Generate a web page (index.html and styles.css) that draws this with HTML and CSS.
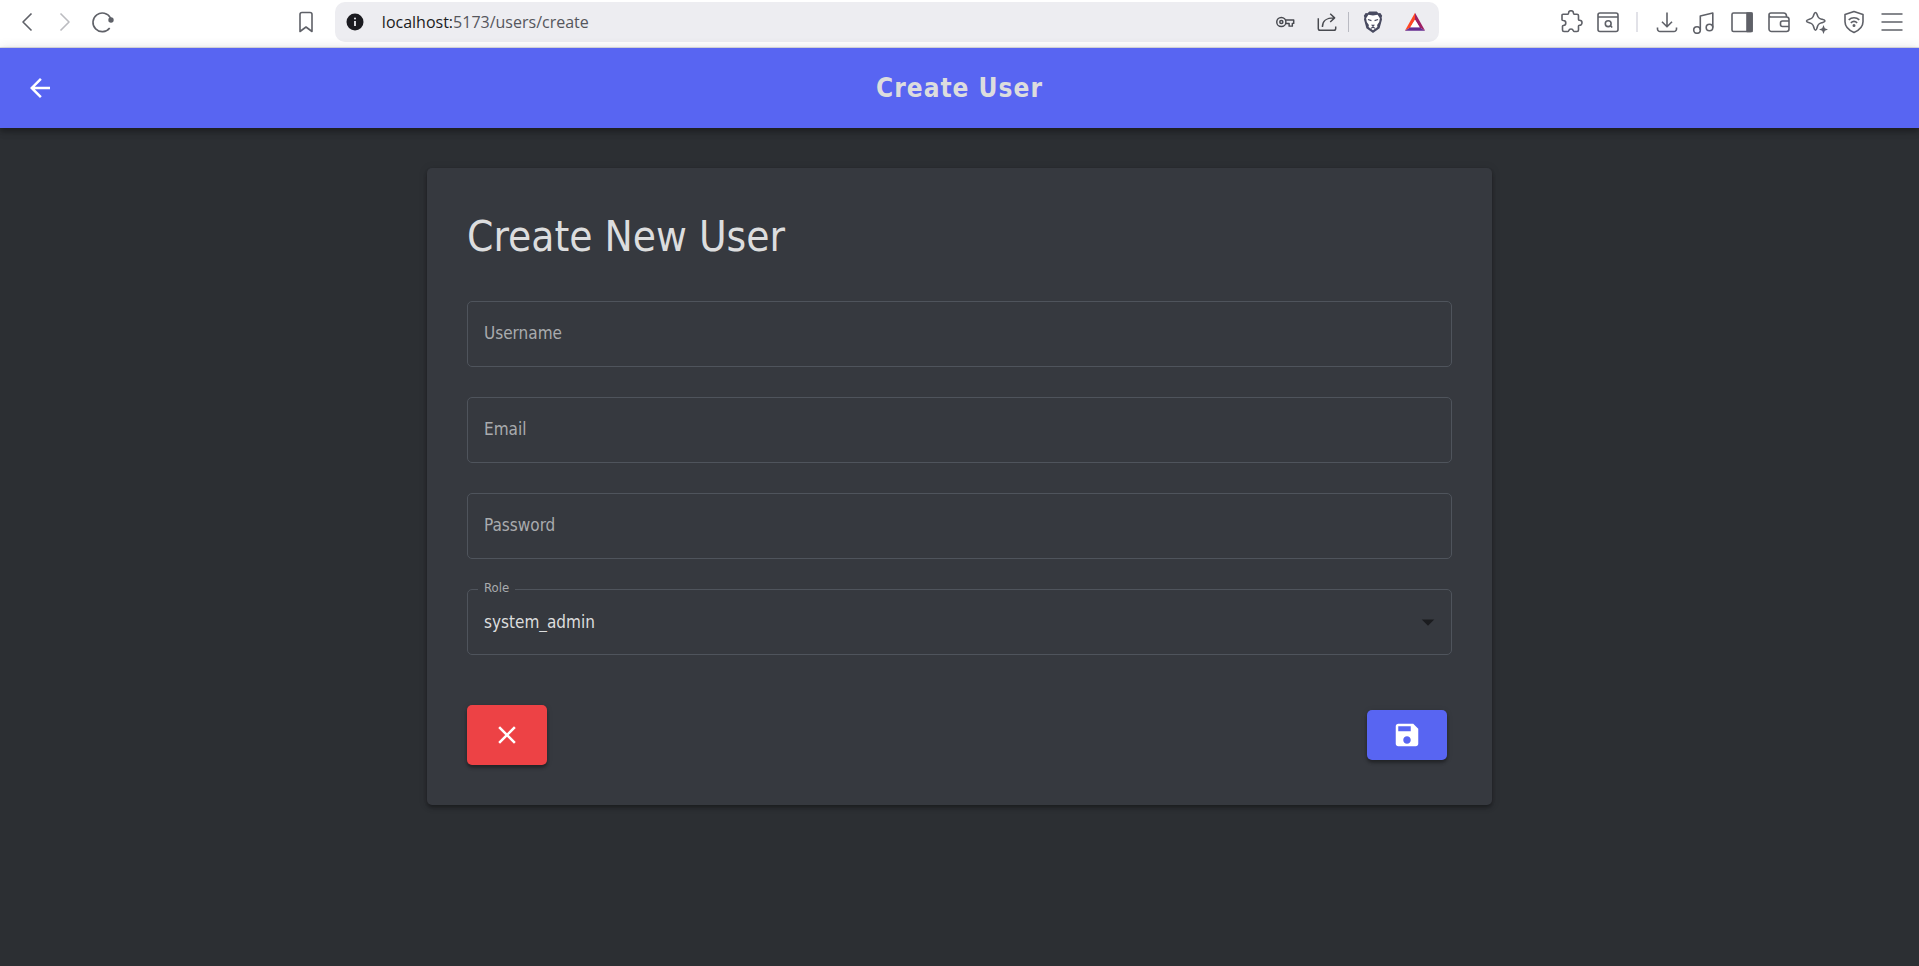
FILE: index.html
```html
<!DOCTYPE html>
<html lang="en">
<head>
<meta charset="utf-8">
<title>Create User</title>
<link rel="stylesheet" href="styles.css">
</head>
<body>
<div class="toolbar">
  <nav class="toolbar-nav" aria-label="Browser navigation">
    <button class="tool" type="button" aria-label="Back"><svg class="icon" viewBox="0 0 24 24"><path d="M16.500 3.500 8 12l8.500 8.500"/></svg></button>
    <button class="tool tool-off" type="button" aria-label="Forward"><svg class="icon" viewBox="0 0 24 24"><path d="M7.500 3.500 16 12l-8.500 8.500"/></svg></button>
    <button class="tool" type="button" aria-label="Reload"><svg class="icon" viewBox="0 0 24 24"><path d="M18.700 17.900A9.300 9.300 0 1 1 19.500 8"/><circle cx="20" cy="10" r="2.700" fill="currentColor" stroke="none"/></svg></button>
  </nav>
  <div class="toolbar-location">
    <button class="tool" type="button" aria-label="Bookmark"><svg class="icon" viewBox="0 0 24 24"><path d="M8 2.500h8a2 2 0 0 1 2 2v17l-6-4.500-6 4.500v-17a2 2 0 0 1 2-2z"/></svg></button>
    <div class="address">
      <svg class="icon icon-info" viewBox="0 0 24 24"><circle cx="12" cy="12" r="8.500" fill="#1b1b20"/><path d="M12 11v5" stroke="#ededf1" stroke-width="1.800"/><circle cx="12" cy="8.400" r="1" fill="#ededf1"/></svg>
      <a class="url" href="#"><span class="url-host">localhost:</span>5173/users/create</a>
      <div class="address-tools">
        <button class="tool" type="button" aria-label="Passwords"><svg class="icon" viewBox="0 0 24 24"><circle cx="8" cy="12" r="5"/><circle cx="8" cy="12" r="1.700"/><path d="M12.500 9.800H21.500v3.700H20v3h-3.500v-2.800h-3.800"/></svg></button>
        <button class="tool tool-share" type="button" aria-label="Share"><svg class="icon" viewBox="0 0 24 24"><path d="M2.500 8v11a2 2 0 0 0 2 2h15a2 2 0 0 0 2-2v-2M7 17.500C7 11 10 7.500 20 7.500M15.500 3l4.800 4.500-4.800 4.500"/></svg></button>
        <span class="separator"></span>
        <button class="tool" type="button" aria-label="Shields"><svg class="icon" viewBox="0 0 24 24"><path d="M8 .5h8l2 2 2-.3 2 3-.6 2 .4 2-2.600 9.500L12 24l-7.200-5.300L2.200 9.200l.4-2-.6-2 2-3 2 .3z" fill="#484a60" stroke="none"/><path d="m7 4 5 1 5-1 2.500 4-.7 4-2.300 3.200.3 2.300L12 21l-4.800-3.500.3-2.300L5.200 12l-.7-4z" fill="#fff" stroke="none"/><path d="m6.500 9.300 3.800 1.200M17.500 9.300l-3.800 1.200M10.500 15l1.500 1.200 1.500-1.200M12 16v1.800M9.800 18.800l2.200-1 2.200 1" stroke="#484a60" stroke-width="1.300"/></svg></button>
        <button class="tool tool-last" type="button" aria-label="Rewards"><svg class="icon" viewBox="0 0 24 24"><path d="M12 2 1 21.500l6-3.700 5-8.300z" fill="#ff4724"/><path d="m12 2 11 19.500-6-3.700-5-8.300z" fill="#9e1f63"/><path d="M1 21.500h22l-6-3.700H7z" fill="#662d91"/><path d="m12 9.500 5 8.300H7z" fill="#fff"/></svg></button>
      </div>
    </div>
  </div>
  <div class="toolbar-extras">
    <div class="extras-pair">
      <button class="tool" type="button" aria-label="Extensions"><svg class="icon" viewBox="0 0 24 24"><path d="M4 4.200h4.800c.5 0 .7-.4.700-1a2.500 2.500 0 0 1 5 0c0 .6.200 1 .7 1H18a1.500 1.500 0 0 1 1.500 1.500v3.800c0 .6.400.8 1 .8a2.500 2.500 0 0 1 0 5c-.6 0-1 .2-1 .8V20a1.500 1.500 0 0 1-1.500 1.500h-3c-.4 0-.6-.3-.7-.8a2.400 2.400 0 0 0-4.600 0c-.1.500-.3.800-.7.800H5A1.500 1.500 0 0 1 3.500 20v-3.800c0-.5.300-.6.800-.7a2.500 2.500 0 0 0 0-5c-.5-.1-1.300-.2-1.300-.8V5.200a1 1 0 0 1 1-1z"/></svg></button>
      <button class="tool" type="button" aria-label="Search tabs"><svg class="icon" viewBox="0 0 24 24"><rect x="2" y="3" width="20" height="18.500" rx="2"/><path d="M2 7h20M14.500 15.700l1.700 1.800"/><circle cx="12.200" cy="13.700" r="2.900"/></svg></button>
    </div>
    <span class="separator separator-light"></span>
    <div class="extras-row">
      <button class="tool" type="button" aria-label="Downloads"><svg class="icon" viewBox="0 0 24 24"><path d="M12 2.500v14M7 11.800l5 5 5-5M2.500 17.500V19a2.500 2.500 0 0 0 2.500 2.500h14a2.500 2.500 0 0 0 2.500-2.500v-1.500"/></svg></button>
      <button class="tool" type="button" aria-label="Playlist"><svg class="icon" viewBox="0 0 24 24"><circle cx="5" cy="20" r="3.300"/><circle cx="17.500" cy="17.500" r="3.300"/><path d="M8.300 20V6L20.800 3v14.500"/></svg></button>
      <button class="tool" type="button" aria-label="Sidebar"><svg class="icon" viewBox="0 0 24 24"><rect x="2" y="3" width="20" height="18.500" rx="1.500"/><path class="solid" d="M17 3h5v18.500h-5z"/></svg></button>
      <button class="tool" type="button" aria-label="Wallet"><svg class="icon" viewBox="0 0 24 24"><path d="M2 5.500V19a2.500 2.500 0 0 0 2.500 2.500h15A2.500 2.500 0 0 0 22 19V9.500A2.500 2.500 0 0 0 19.500 7h-15A2 2 0 0 1 2 5a2 2 0 0 1 2-2h12.500a3 3 0 0 1 3 3v1M22 11h-6.500a2 2 0 0 0-2 2v1.500a2 2 0 0 0 2 2H22"/></svg></button>
      <button class="tool" type="button" aria-label="Assistant"><svg class="icon" viewBox="0 0 24 24"><path d="M10.500 2.500c1 0 1.300.8 1.700 2.200.8 3 1.500 3.700 4.500 4.500 1.400.4 3.300.8 3.300 1.800s-1.900 1.400-3.300 1.800c-3 .8-3.700 1.500-4.500 4.500-.4 1.400-.7 2.900-1.700 2.900s-1.300-1.500-1.700-2.900c-.8-3-1.500-3.700-4.500-4.500C2.900 12.400 1.500 12 1.500 11s1.400-1.400 2.800-1.800c3-.8 3.700-1.500 4.500-4.500.4-1.400.7-2.200 1.700-2.200z"/><path d="m18.500 15 1.300 3.200 3.200 1.300-3.200 1.300-1.300 3.200-1.300-3.200-3.200-1.300 3.200-1.300z" fill="currentColor" stroke="none"/></svg></button>
      <button class="tool" type="button" aria-label="VPN"><svg class="icon" viewBox="0 0 24 24"><path d="m12 1.500 9 3v7.200c0 5-4 8.500-9 10.800-5-2.300-9-5.800-9-10.800V4.500zM6.700 9.800c3-2.700 7.600-2.700 10.600 0M8.800 12.800c2-1.700 4.400-1.700 6.400 0"/><circle class="solid" cx="12" cy="15.500" r=".7"/></svg></button>
      <button class="tool" type="button" aria-label="Menu"><svg class="icon" viewBox="0 0 24 24"><path d="M1.500 4h21M1.500 12h21M1.500 20h21"/></svg></button>
    </div>
  </div>
</div>

<header class="app-bar">
  <a class="back-link" href="#" aria-label="Go back"><svg class="icon-app" viewBox="0 0 24 24"><path d="M20 11H7.830l5.590-5.590L12 4l-8 8 8 8 1.410-1.410L7.830 13H20v-2z"/></svg></a>
  <h1 class="app-title">Create User</h1>
</header>

<main class="page">
  <form class="card">
    <h2 class="card-title">Create New User</h2>
    <div class="fields">
      <div class="field">
        <input class="control" id="username" type="text">
        <label class="field-label" for="username">Username</label>
      </div>
      <div class="field">
        <input class="control" id="email" type="email">
        <label class="field-label" for="email">Email</label>
      </div>
      <div class="field">
        <input class="control" id="password" type="password">
        <label class="field-label" for="password">Password</label>
      </div>
      <div class="field">
        <select class="control" id="role"><option>system_admin</option></select>
        <label class="field-label field-label-raised" for="role">Role</label>
        <svg class="select-arrow" viewBox="0 0 24 24"><path d="M7 10l5 5 5-5z"/></svg>
      </div>
    </div>
    <div class="actions">
      <button class="action action-cancel" type="button" aria-label="Cancel"><svg class="icon-app" viewBox="0 0 24 24"><path d="M19 6.410 17.590 5 12 10.590 6.410 5 5 6.410 10.590 12 5 17.590 6.410 19 12 13.410 17.590 19 19 17.590 13.410 12z"/></svg></button>
      <button class="action action-save" type="submit" aria-label="Save"><svg class="icon-app" viewBox="0 0 24 24"><path d="M17 3H5c-1.110 0-2 .9-2 2v14c0 1.100.89 2 2 2h14c1.100 0 2-.9 2-2V7l-4-4zm-5 16c-1.660 0-3-1.340-3-3s1.340-3 3-3 3 1.340 3 3-1.340 3-3 3zm3-10H5V5h10v4z"/></svg></button>
    </div>
  </form>
</main>
</body>
</html>
```
FILE: styles.css
```css
* {
  box-sizing: border-box;
}

body {
  margin: 0;
  min-height: 100vh;
  display: flex;
  flex-direction: column;
  background: #2c2f33;
  color: #dcddde;
  font-family: "DejaVu Sans Condensed", Tahoma, "DejaVu Sans", sans-serif;
}

button {
  margin: 0;
  padding: 0;
  border: 0;
  background: none;
  color: inherit;
  font: inherit;
  cursor: pointer;
}

/* Browser toolbar */
.toolbar {
  display: grid;
  grid-template-columns: 3fr 12fr 5fr;
  align-items: center;
  height: 48px;
  padding-bottom: 3px;
  background: #fff;
  border-bottom: 1px solid #e2e2e8;
  color: #5f6168;
}

.tool {
  display: flex;
  flex: none;
}

.tool-off {
  color: #bbbcc0;
}

.icon {
  display: block;
  flex: none;
  width: 24px;
  height: 24px;
  fill: none;
  stroke: currentColor;
  stroke-width: 1.6;
  stroke-linejoin: round;
}

.icon .solid {
  fill: currentColor;
}

.icon-info,
.tool-last .icon {
  stroke: none;
}

.toolbar-nav {
  display: flex;
  gap: 14px;
  padding-left: 15px;
}

.toolbar-location {
  display: flex;
  align-items: center;
  gap: 17px;
  padding-left: 6px;
}

.address {
  flex: 1;
  display: flex;
  align-items: center;
  height: 40px;
  padding: 0 13px 0 8px;
  border-radius: 10px;
  background: #ededf1;
}

.url {
  flex: 1;
  margin-left: 15px;
  color: #55565c;
  font-family: "Open Sans", "Noto Sans", sans-serif;
  font-size: 16px;
  text-decoration: none;
}

.url-host {
  color: #1b1b20;
}

.address-tools {
  display: flex;
  align-items: center;
  color: #484a50;
}

.address-tools .icon {
  width: 22px;
  height: 22px;
}

.tool-share {
  margin: 0 10px 0 20px;
}

.separator {
  width: 1px;
  height: 20px;
  margin-right: 13px;
  background: #b9bac2;
}

.tool-last {
  margin-left: 20px;
}

.toolbar-extras {
  display: flex;
  align-items: center;
  justify-content: flex-end;
  padding-right: 15px;
}

.extras-pair {
  display: flex;
  gap: 13px;
}

.separator-light {
  width: 2px;
  margin: 0 17px 0 16px;
  background: #e2e2e8;
}

.extras-row {
  display: flex;
  justify-content: space-between;
  width: 249px;
}

/* Application bar */
.app-bar {
  display: grid;
  grid-template-columns: 1fr auto 1fr;
  align-items: center;
  height: 80px;
  padding: 0 25px;
  background: #5865f2;
  box-shadow: 0 2px 5px rgba(0, 0, 0, .2), 0 5px 6px rgba(0, 0, 0, .14), 0 1px 12px rgba(0, 0, 0, .12);
}

.back-link {
  justify-self: start;
  color: #fff;
}

.icon-app {
  display: block;
  width: 30px;
  height: 30px;
  fill: currentColor;
}

.app-title {
  margin: 0;
  font-size: 26px;
  font-weight: 700;
  letter-spacing: 1px;
}

/* Form card */
.page {
  flex: 1;
  padding: 40px 24px;
}

.card {
  max-width: 1065px;
  margin: 0 auto;
  padding: 42px 40px 40px;
  border-radius: 5px;
  background: #36393f;
  box-shadow: 0 3px 4px rgba(0, 0, 0, .2), 0 2px 3px rgba(0, 0, 0, .14), 0 1px 10px rgba(0, 0, 0, .12);
}

.card-title {
  margin: 0 0 38px;
  font-size: 42px;
  font-weight: 400;
  line-height: 53px;
}

.fields {
  display: grid;
  gap: 30px;
}

.field {
  position: relative;
}

.control {
  display: block;
  width: 100%;
  height: 66px;
  margin: 0;
  padding: 0 16px;
  border: 1px solid #4f545c;
  border-radius: 5px;
  outline: 0;
  appearance: none;
  background: transparent;
  color: #dcddde;
  font: inherit;
  font-size: 17px;
}

.field-label {
  position: absolute;
  top: 20px;
  left: 17px;
  color: #a9abae;
  font-size: 17px;
  line-height: 24px;
  pointer-events: none;
}

.field-label-raised {
  top: -10px;
  left: 11px;
  padding: 0 6px;
  background: #36393f;
  font-size: 13px;
  line-height: 18px;
}

.select-arrow {
  position: absolute;
  top: 18px;
  right: 9px;
  width: 30px;
  height: 30px;
  fill: #1b1c1f;
  pointer-events: none;
}

.actions {
  display: flex;
  align-items: center;
  justify-content: space-between;
  margin-top: 50px;
  padding-right: 5px;
}

.action {
  display: flex;
  align-items: center;
  justify-content: center;
  width: 80px;
  height: 50px;
  border-radius: 5px;
  color: #fff;
  box-shadow: 0 3px 3px rgba(0, 0, 0, .2), 0 2px 3px rgba(0, 0, 0, .14), 0 1px 6px rgba(0, 0, 0, .12);
}

.action-cancel {
  height: 60px;
  background: #ed4245;
}

.action-save {
  background: #5865f2;
}
```
